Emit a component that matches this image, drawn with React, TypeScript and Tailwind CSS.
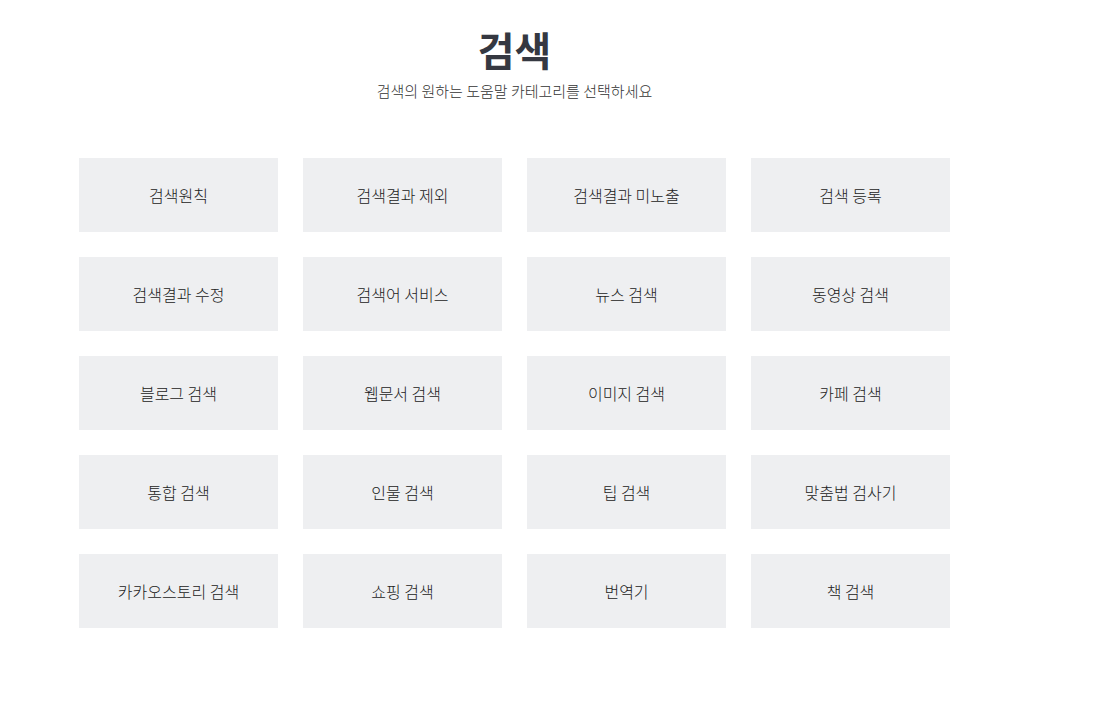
const items = [
  "검색원칙",
  "검색결과 제외",
  "검색결과 미노출",
  "검색 등록",
  "검색결과 수정",
  "검색어 서비스",
  "뉴스 검색",
  "동영상 검색",
  "블로그 검색",
  "웹문서 검색",
  "이미지 검색",
  "카페 검색",
  "통합 검색",
  "인물 검색",
  "팁 검색",
  "맞춤법 검사기",
  "카카오스토리 검색",
  "쇼핑 검색",
  "번역기",
  "책 검색",
];

export default function App() {
  return (
    <div
      className="min-h-screen bg-white"
      style={{ fontFamily: '"Noto Sans CJK KR", "Noto Sans", sans-serif' }}
    >
      <div className="ml-[79px] w-[871px] pt-[23px]">
        <h1 className="text-center text-[40px] font-bold leading-[52px] text-[#353841]">검색</h1>
        <p className="mt-[5px] text-center text-[15px] font-light leading-[22px] text-[#333]">
          검색의 원하는 도움말 카테고리를 선택하세요
        </p>
        <div className="mt-[56px] grid grid-cols-4 gap-[25px]">
          {items.map((item) => (
            <a
              key={item}
              href="#"
              className="flex h-[74px] items-center justify-center bg-[#eeeff1] pb-[1px] text-[16px] font-light text-[#222]"
            >
              {item}
            </a>
          ))}
        </div>
      </div>
    </div>
  );
}
